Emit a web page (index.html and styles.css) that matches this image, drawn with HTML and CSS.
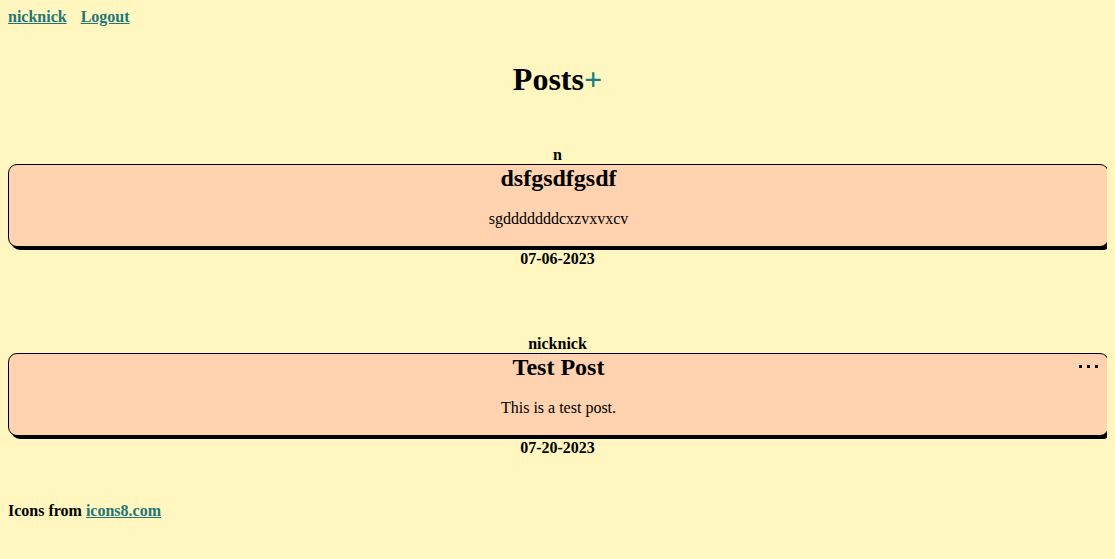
FILE: index.html
```html
<!DOCTYPE html>
<html>
<head>
<meta charset="utf-8">
<link rel="stylesheet" href="styles.css">
</head>
<body>
<nav class="nav">
  <a href="#">nicknick</a>
  <a href="#">Logout</a>
</nav>
<h1 class="title">Posts<span class="plus">+</span></h1>
<main class="posts">
  <section class="post">
    <div class="author">n</div>
    <div class="card">
      <h2 class="card-title">dsfgsdfgsdf</h2>
      <p class="card-body">sgdddddddcxzvxvxcv</p>
    </div>
    <div class="date">07-06-2023</div>
  </section>
  <section class="post">
    <div class="author">nicknick</div>
    <div class="card">
      <div class="menu"><span></span><span></span><span></span></div>
      <h2 class="card-title">Test Post</h2>
      <p class="card-body">This is a test post.</p>
    </div>
    <div class="date">07-20-2023</div>
  </section>
</main>
<footer class="footer">Icons from <a href="#">icons8.com</a></footer>
</body>
</html>
```
FILE: styles.css
```css
html { background: #fff6c0; }
body {
  margin: 8px;
  font-family: "Liberation Serif", "Times New Roman", serif;
  font-size: 16px;
  color: #000;
  background: #fff6c0;
}
a { color: #1f7777; font-weight: bold; }
.nav {
  display: flex;
  gap: 14px;
  line-height: 18px;
}
.title {
  margin: 35px 0 48px;
  font-size: 32px;
  line-height: 37px;
  text-align: center;
}
.plus { color: #1a8080; }
.posts {
  display: flex;
  flex-direction: column;
  gap: 67px;
}
.post { display: block; }
.author, .date {
  font-weight: bold;
  line-height: 18px;
  text-align: center;
}
.date { margin-top: 3px; }
.card {
  position: relative;
  width: 100%;
  box-sizing: content-box;
  background: #ffd3b0;
  border: 1px solid #000;
  border-radius: 9px;
  box-shadow: 3px 3px 0 #000;
  text-align: center;
  padding-bottom: 18px;
}
.card-title {
  margin: 0;
  font-size: 24px;
  line-height: 27px;
}
.card-body {
  margin: 18px 0 0;
  line-height: 18px;
}
.menu {
  position: absolute;
  top: 11px;
  right: 10px;
  display: flex;
  gap: 5px;
}
.menu span {
  width: 3px;
  height: 3px;
  background: #000;
}
.footer {
  margin-top: 45px;
  font-weight: bold;
  line-height: 18px;
}
```
